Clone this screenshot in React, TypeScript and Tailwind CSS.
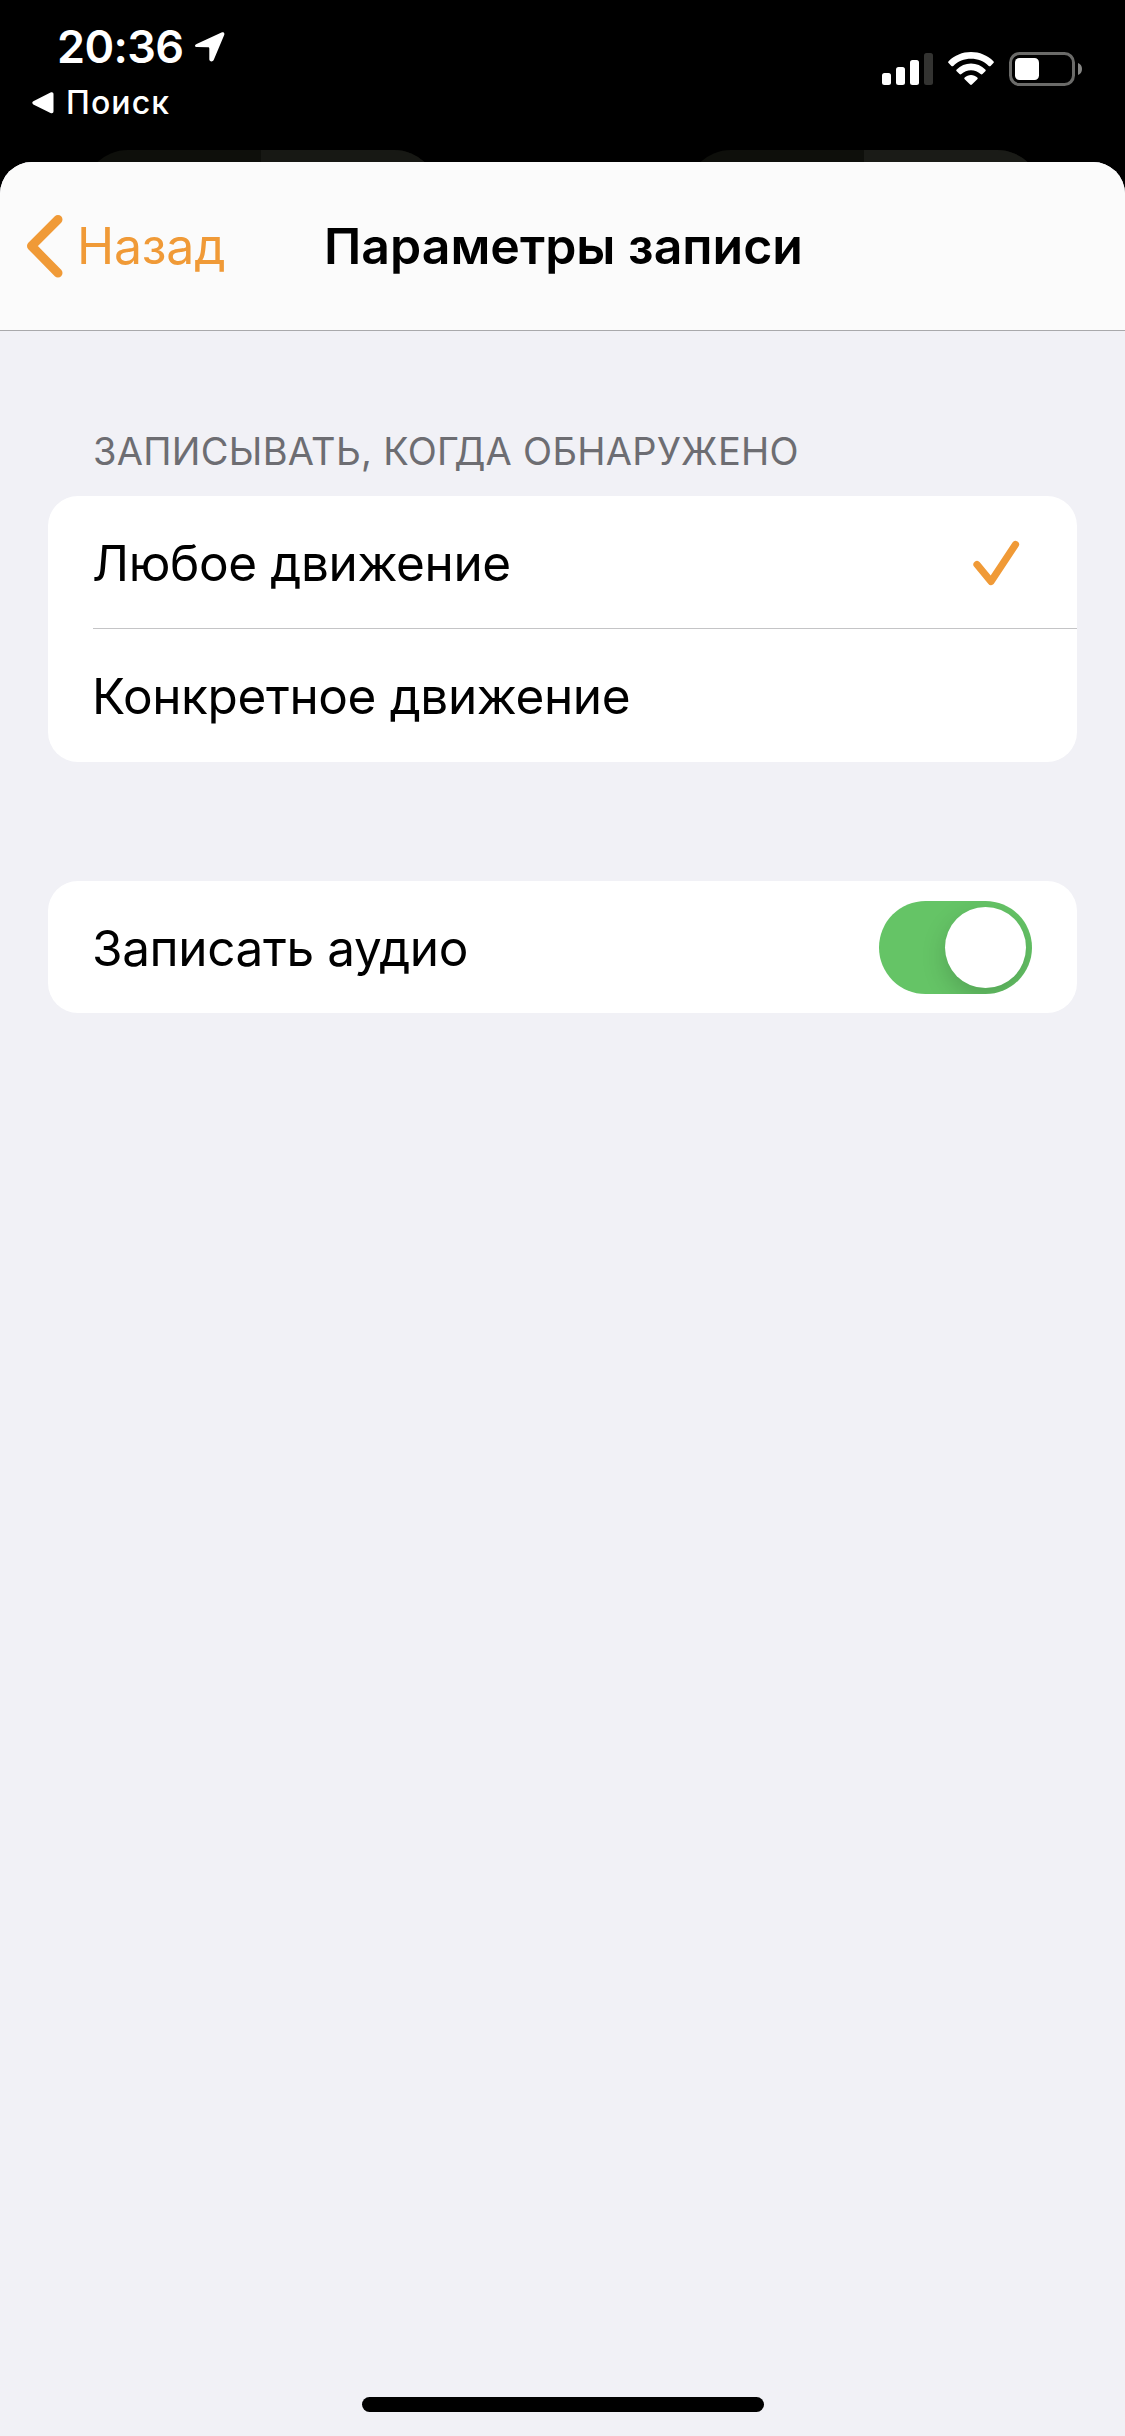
import React from "react"

const options = [
  { label: "Любое движение", selected: true },
  { label: "Конкретное движение", selected: false },
]

function StatusBar() {
  return (
    <div className="flex h-[150px] items-start justify-between text-white">
      <div className="pt-[20px]">
        <div className="flex items-start pl-[57px]">
          <span className="w-[138px] whitespace-nowrap text-[45px] leading-[54px] font-semibold tracking-[-0.6px]">20:36</span>
          <svg className="mt-[12px] h-[30px] w-[30px]" viewBox="0 0 30 30" fill="currentColor">
            <path d="M1.6 12 26.500 .6C28.500-.2 29.900 1 29.200 3L18.800 27.800C17.900 30.200 14.300 29.900 14.300 27.300V16.600C14.300 15.600 13.900 15.200 12.900 15.200L2 15.100C-.5 15-.6 13 1.600 12Z" />
          </svg>
        </div>
        <div className="flex items-center pl-[32px]">
          <svg className="mr-[12px] h-[22px] w-[22px]" viewBox="0 0 22 22" fill="currentColor">
            <path d="M1.300 9.300 18.500.6C20.300-.2 21.500.5 21.500 2.200V19.300C21.500 21 20.300 21.700 18.500 20.900L1.300 12.400C-.1 11.600-.1 10 1.300 9.300Z" />
          </svg>
          <span className="whitespace-nowrap text-[32px] leading-[58px] font-medium tracking-[1.1px]">Поиск</span>
        </div>
      </div>
      <div className="flex items-start pt-[52px] pr-[42px]">
        <svg className="mr-[15px] h-[34px] w-[51px]" viewBox="0 0 51 34" fill="currentColor">
          <rect x="0" y="21" width="9" height="12" rx="2.500" />
          <rect x="14" y="15" width="9" height="18" rx="2.500" />
          <rect x="28" y="8" width="9" height="25" rx="2.500" />
          <rect x="42" y="1" width="9" height="32" rx="2.500" fill="#333331" />
        </svg>
        <svg className="mr-[15px] h-[34px] w-[46px]" viewBox="0 0 46 34" fill="currentColor">
          <path d="M.6 9.200C6.500 3.300 14.400 0 23 0S39.500 3.300 45.400 9.200C46 9.800 46 10.500 45.400 11.100L42.600 13.900C42 14.500 41.300 14.500 40.700 13.900C36 9.300 29.800 6.800 23 6.800S10 9.300 5.300 13.900C4.700 14.500 4 14.500 3.400 13.900L.6 11.100C0 10.500 0 9.800.6 9.200Z" />
          <path d="M8.700 17.400C12.500 13.600 17.500 11.400 23 11.400S33.500 13.600 37.300 17.400C37.900 18 37.900 18.700 37.300 19.300L34.500 22.100C33.900 22.700 33.200 22.700 32.600 22.100C30 19.600 26.700 18.200 23 18.200S16 19.600 13.400 22.100C12.800 22.700 12.100 22.700 11.500 22.100L8.700 19.300C8.100 18.700 8.100 18 8.700 17.400Z" />
          <path d="M16.700 25.500C18.400 23.900 20.600 23 23 23S27.600 23.900 29.300 25.500C29.900 26.100 29.900 26.700 29.300 27.300L23.900 32.600C23.300 33.200 22.700 33.200 22.100 32.600L16.700 27.300C16.100 26.700 16.100 26.100 16.700 25.500Z" />
        </svg>
        <svg className="h-[34px] w-[74px]" viewBox="0 0 74 34">
          <rect x="1.500" y="1.500" width="63" height="31" rx="9" fill="none" stroke="#6b6b69" strokeWidth="3" />
          <rect x="6" y="6" width="24" height="22" rx="4.500" fill="#fff" />
          <path d="M69 11C71.700 12 73 14.200 73 17S71.700 22 69 23Z" fill="#868684" />
        </svg>
      </div>
    </div>
  )
}

// Tiles of the dimmed screen that peek out above the sheet
function BackdropTiles() {
  return (
    <div className="flex h-[12px] justify-between overflow-hidden pr-[83px] pl-[83px]">
      <div className="flex h-[90px] w-[356px] overflow-hidden rounded-[46px] bg-[#0e0f0b]">
        <div className="ml-[178px] flex-1 bg-[#171814]" />
      </div>
      <div className="flex h-[90px] w-[356px] overflow-hidden rounded-[46px] bg-[#0e0f0b]">
        <div className="ml-[178px] flex-1 bg-[#1a1b17]" />
      </div>
    </div>
  )
}

function NavBar() {
  return (
    <header className="grid h-[169px] grid-cols-[1fr_auto_1fr] items-center border-b border-[#a9a9ab] bg-[#fbfbfb]">
      <button className="flex items-center pl-[26px] text-[#f09a37]">
        <svg className="mr-[14px] h-[64px] w-[37px]" viewBox="0 0 37 64" fill="none" stroke="currentColor" strokeWidth="9" strokeLinecap="round" strokeLinejoin="round">
          <path d="M32 5.500 5.500 32 32 59" />
        </svg>
        <span className="text-[50px] leading-[60px] tracking-[-0.2px]">Назад</span>
      </button>
      <h1 className="pl-[2px] text-[50px] leading-[60px] font-semibold whitespace-nowrap">Параметры записи</h1>
    </header>
  )
}

export default function App() {
  return (
    <div className="flex h-[2436px] w-[1125px] flex-col overflow-hidden bg-black font-['Inter','Liberation_Sans',sans-serif]">
      <StatusBar />
      <BackdropTiles />
      <main className="flex flex-1 flex-col overflow-hidden rounded-t-[32px] bg-[#f1f1f6]">
        <NavBar />

        <section className="px-[48px] pt-[96px]">
          <h2 className="pl-[45px] text-[38px] leading-[48px] tracking-[0.3px] whitespace-nowrap text-[#6d6d72]">ЗАПИСЫВАТЬ, КОГДА ОБНАРУЖЕНО</h2>
          <ul className="mt-[21px] overflow-hidden rounded-[30px] bg-white">
            {options.map((option) => (
              <li key={option.label} className="group pl-[45px]">
                <div className="flex h-[133px] items-center justify-between border-b border-[#c4c4c6] pt-px pr-[57px] group-last:border-b-0">
                  <span className="-ml-px text-[49.5px] leading-[60px] tracking-[-0.38px] whitespace-nowrap">{option.label}</span>
                  {option.selected && (
                    <svg className="h-[46px] w-[48px]" viewBox="0 0 48 46" fill="none" stroke="#f09a37" strokeWidth="7.200" strokeLinecap="round" strokeLinejoin="round">
                      <path d="M5 24.500 19 41.500 43.500 4.500" />
                    </svg>
                  )}
                </div>
              </li>
            ))}
          </ul>
        </section>

        <section className="px-[48px] pt-[119px]">
          <div className="flex h-[132px] items-center justify-between rounded-[30px] bg-white pr-[45px] pl-[45px]">
            <span className="-ml-px pt-px text-[49.5px] leading-[60px] tracking-[-0.38px] whitespace-nowrap">Записать аудио</span>
            <button role="switch" aria-checked="true" className="flex h-[93px] w-[153px] items-center justify-end overflow-hidden rounded-full bg-[#65c466] pr-[6px]">
              <span className="h-[81px] w-[81px] rounded-full bg-white shadow-[0_9px_24px_rgba(0,0,0,0.17)]" />
            </button>
          </div>
        </section>

        <div className="mx-auto mt-auto mb-[24px] h-[15px] w-[402px] rounded-full bg-black" />
      </main>
    </div>
  )
}
